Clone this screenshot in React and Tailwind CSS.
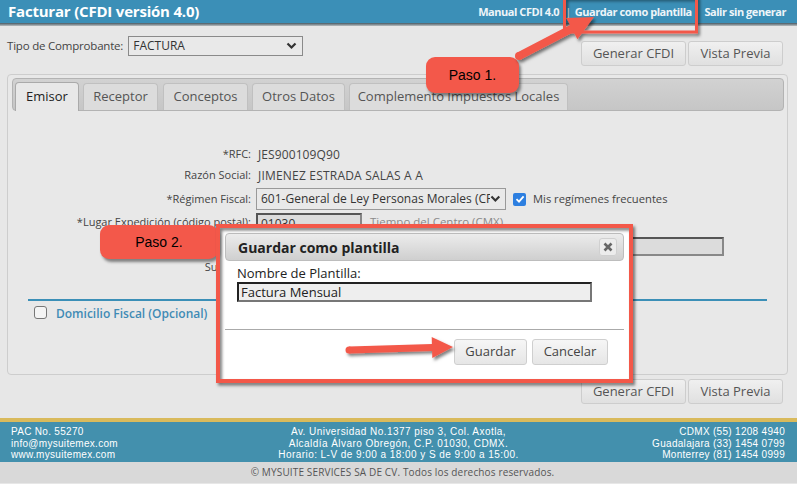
import React from "react";

function arrowPoints(x1, y1, x2, y2, sw, hl, hw) {
  const dx = x2 - x1, dy = y2 - y1;
  const L = Math.hypot(dx, dy);
  const ux = dx / L, uy = dy / L;
  const px = -uy, py = ux;
  const bx = x2 - ux * hl, by = y2 - uy * hl;
  const pts = [
    [x1 + (px * sw) / 2, y1 + (py * sw) / 2],
    [bx + (px * sw) / 2, by + (py * sw) / 2],
    [bx + (px * hw) / 2, by + (py * hw) / 2],
    [x2, y2],
    [bx - (px * hw) / 2, by - (py * hw) / 2],
    [bx - (px * sw) / 2, by - (py * sw) / 2],
    [x1 - (px * sw) / 2, y1 - (py * sw) / 2],
  ];
  return pts.map((p) => p[0].toFixed(1) + "," + p[1].toFixed(1)).join(" ");
}

function Chevron() {
  return (
    <svg width="11" height="8" viewBox="0 0 11 8">
      <path d="M1.5 1.5 L5.5 5.5 L9.5 1.5" fill="none" stroke="#333" strokeWidth="2.2" />
    </svg>
  );
}

function GrayButton({ children, w }) {
  return (
    <div
      className={`h-[25px] ${w} flex items-center justify-center rounded-[3px] border border-[#cdcdcd] bg-gradient-to-b from-[#f0f0f0] to-[#e0e0e0] text-[13px] text-[#555]`}
    >
      {children}
    </div>
  );
}

const RED = "#f3584a";

export default function App() {
  return (
    <div className="relative w-[797px] h-[484px] overflow-hidden bg-[#e7e7e7] font-['Open_Sans',sans-serif] text-[#444]">
      {/* Header */}
      <div className="h-[23px] bg-[#3b8fb7] flex items-center justify-between pl-[8px] pr-[11px]">
        <div className="text-white font-bold text-[15px] leading-none tracking-[-0.2px]">Facturar (CFDI versión 4.0)</div>
        <div className="font-bold text-[11px] leading-none flex items-center tracking-[-0.45px] text-[#eef5f9]">
          <span>Manual CFDI 4.0</span>
          <span className="ml-[6px] font-normal text-white">|</span>
          <span className="ml-[4px]">Guardar como plantilla</span>
          <span className="ml-[2px] font-normal text-white">|</span>
          <span className="ml-[5px]">Salir sin generar</span>
        </div>
      </div>
      <div className="h-[3px] bg-gradient-to-b from-[#4a5b65] to-[#b9bdbf]" />

      {/* Top row */}
      <div className="h-[48px] flex justify-between">
        <div className="pt-[10px] pl-[7px] flex items-start gap-[5px]">
          <span className="text-[11.5px] text-[#444] leading-[20px] tracking-[-0.2px]">Tipo de Comprobante:</span>
          <div className="w-[175px] h-[20px] border border-[#8a8a8a] bg-[#e9e9e9] flex items-center justify-between pl-[4px] pr-[5px] text-[12px] text-[#333]">
            <span>FACTURA</span>
            <Chevron />
          </div>
        </div>
        <div className="pt-[15px] pr-[14px] flex gap-[2px]">
          <GrayButton w="w-[105px]">Generar CFDI</GrayButton>
          <GrayButton w="w-[95px]">Vista Previa</GrayButton>
        </div>
      </div>

      {/* Tab container */}
      <div className="ml-[7px] w-[781px] h-[301px] border border-[#cdcdcd] rounded-[4px] bg-[#e8e8e8]">
        <div className="mt-[3px] ml-[4px] mr-[3px] h-[33px] rounded-[4px] border border-[#b3b3b3] bg-gradient-to-b from-[#d2d2d2] to-[#c6c6c6] flex items-end pl-[2px] gap-[4px]">
          <div className="w-[64px] h-[29px] -mb-px rounded-t-[4px] border border-b-0 border-[#aaa] bg-[#e8e8e8] flex items-center justify-center text-[13px] text-[#222]">Emisor</div>
          <div className="w-[75px] h-[27px] rounded-t-[4px] border border-b-0 border-[#c0c0c0] bg-[#dcdcdc] flex items-center justify-center text-[13px] text-[#555]">Receptor</div>
          <div className="w-[85px] h-[27px] ml-[1px] rounded-t-[4px] border border-b-0 border-[#c0c0c0] bg-[#dcdcdc] flex items-center justify-center text-[13px] text-[#555]">Conceptos</div>
          <div className="w-[93px] h-[27px] rounded-t-[4px] border border-b-0 border-[#c0c0c0] bg-[#dcdcdc] flex items-center justify-center text-[13px] text-[#555]">Otros Datos</div>
          <div className="w-[219px] h-[27px] rounded-t-[4px] border border-b-0 border-[#c0c0c0] bg-[#dcdcdc] flex items-center justify-center text-[13px] text-[#555]">Complemento Impuestos Locales</div>
        </div>

        <div className="pt-[33px] text-[12px] text-[#444]">
          <div className="h-[21px] flex items-center">
            <div className="w-[243px] text-right text-[11px]">*RFC:</div>
            <div className="ml-[7px] tracking-[0.1px]">JES900109Q90</div>
          </div>
          <div className="h-[21px] flex items-center">
            <div className="w-[243px] text-right text-[11px]">Razón Social:</div>
            <div className="ml-[7px] tracking-[0.2px]">JIMENEZ ESTRADA SALAS A A</div>
          </div>
          <div className="h-[24px] mt-[1px] flex items-center">
            <div className="w-[243px] text-right text-[11px]">*Régimen Fiscal:</div>
            <div className="ml-[5px] w-[250px] h-[22px] border border-[#999] bg-[#e9e9e9] flex items-center justify-between pl-[4px] pr-[4px] overflow-hidden">
              <span className="whitespace-nowrap overflow-hidden text-[#333]">601-General de Ley Personas Morales (CFI</span>
              <Chevron />
            </div>
            <div className="ml-[7px] w-[13px] h-[13px] rounded-[2px] bg-[#2d7fe0] flex items-center justify-center">
              <svg width="10" height="10" viewBox="0 0 10 10">
                <path d="M1.5 5.2 L4 7.6 L8.6 2.4" fill="none" stroke="#fff" strokeWidth="1.8" />
              </svg>
            </div>
            <div className="ml-[7px] text-[11.2px]">Mis regímenes frecuentes</div>
          </div>
          <div className="h-[25px] flex items-center">
            <div className="w-[243px] text-right text-[11px] -mt-[3px]">*Lugar Expedición (código postal):</div>
            <div className="ml-[5px] w-[106px] h-[22px] border-2 border-[#555] border-b-[#888] border-r-[#888] bg-[#dcdcdc] pl-[3px] text-[12px] leading-[18px] text-[#333]">01030</div>
            <div className="ml-[8px] text-[#8a8a8a] text-[11.5px] -mt-[3px]">Tiempo del Centro (CMX)</div>
          </div>
          <div className="h-[21px] flex items-center">
            <div className="ml-[622px] w-[94px] h-[19px] border-2 border-[#555] border-b-[#888] border-r-[#888] bg-[#dcdcdc]" />
          </div>
          <div className="h-[20px] flex items-center">
            <div className="w-[243px] text-right text-[11px]">Sucursal:</div>
          </div>
          <div className="mt-[22px] mx-[20px] h-[2px] bg-[#3b8fb7]" />
          <div className="mt-[4px] ml-[26px] flex items-center h-[14px]">
            <div className="w-[13px] h-[13px] rounded-[3px] border border-[#777] bg-[#f4f4f4]" />
            <div className="ml-[9px] mt-[4px] font-semibold text-[#3f8bb5]">Domicilio Fiscal (Opcional)</div>
          </div>
        </div>
      </div>

      {/* bottom buttons */}
      <div className="mt-[4px] pr-[14px] flex justify-end gap-[2px]">
        <GrayButton w="w-[105px]">Generar CFDI</GrayButton>
        <GrayButton w="w-[95px]">Vista Previa</GrayButton>
      </div>

      {/* Footer */}
      <div className="mt-[14px] h-[4px] bg-[#d9ba5c]" />
      <div className="h-[40px] bg-[#4390ad] text-white text-[10px] leading-[11.5px] tracking-[0.3px] font-['Liberation_Sans',sans-serif] flex pl-[11px] pr-[12px] pt-[4px]">
        <div className="w-[200px]">
          <div>PAC No. 55270</div>
          <div>info@mysuitemex.com</div>
          <div>www.mysuitemex.com</div>
        </div>
        <div className="flex-1 text-center tracking-[0.45px]">
          <div>Av. Universidad No.1377 piso 3, Col. Axotla,</div>
          <div>Alcaldía Álvaro Obregón, C.P. 01030, CDMX.</div>
          <div>Horario: L-V de 9:00 a 18:00 y S de 9:00 a 15:00.</div>
        </div>
        <div className="w-[199px] text-right">
          <div>CDMX (55) 1208 4940</div>
          <div>Guadalajara (33) 1454 0799</div>
          <div>Monterrey (81) 1454 0999</div>
        </div>
      </div>
      <div className="h-[21px] bg-[#d9d9d9] flex items-center justify-center text-[10px] text-[#555] tracking-[0.15px] pl-[8px]">
        © MYSUITE SERVICES SA DE CV. Todos los derechos reservados.
      </div>

      {/* Dialog */}
      <div className="absolute left-[220px] top-[228px] w-[409px] h-[151px] bg-white">
        <div className="mt-[5px] ml-[5px] mr-[5px] h-[28px] rounded-[4px] border border-[#bdbdbd] bg-gradient-to-b from-[#ececec] to-[#cfcfcf] flex items-center justify-between pl-[12px] pr-[6px]">
          <span className="font-bold text-[14px] text-[#222]">Guardar como plantilla</span>
          <div className="w-[18px] h-[18px] rounded-[3px] border border-[#d0d0d0] bg-[#ececec] flex items-center justify-center">
            <svg width="10" height="10" viewBox="0 0 10 10">
              <path d="M1.5 1.5 L8.5 8.5 M8.5 1.5 L1.5 8.5" stroke="#666" strokeWidth="2.6" />
            </svg>
          </div>
        </div>
        <div className="pl-[17px] pt-[3px] text-[13px] leading-[18px] text-[#222]">Nombre de Plantilla:</div>
        <div className="ml-[17px] w-[355px] h-[20px] border-2 border-[#222] border-b-[#777] border-r-[#777] bg-[#eeeeee] pl-[2px] text-[13px] leading-[16px] text-[#222]">Factura Mensual</div>
        <div className="mt-[27px] mx-[5px] h-px bg-[#aaa]" />
        <div className="mt-[9px] pr-[21px] flex justify-end gap-[5px]">
          <div className="w-[73px] h-[26px] rounded-[3px] border border-[#cfcfcf] bg-gradient-to-b from-[#f6f6f6] to-[#e6e6e6] flex items-center justify-center text-[13px] text-[#444]">Guardar</div>
          <div className="w-[76px] h-[26px] rounded-[3px] border border-[#cfcfcf] bg-gradient-to-b from-[#f6f6f6] to-[#e6e6e6] flex items-center justify-center text-[13px] text-[#444]">Cancelar</div>
        </div>
      </div>

      {/* Callout boxes */}
      <div className="absolute left-[426px] top-[57px] w-[93px] h-[36px] rounded-[9px] bg-[#f3584a] shadow-[2px_3px_3px_rgba(0,0,0,0.45)] flex items-center justify-center font-['Liberation_Sans',sans-serif] text-[14px] text-black">
        Paso 1.
      </div>
      <div className="absolute left-[100px] top-[225px] w-[118px] h-[34px] rounded-[9px] bg-[#f3584a] shadow-[2px_3px_3px_rgba(0,0,0,0.45)] flex items-center justify-center font-['Liberation_Sans',sans-serif] text-[14px] text-black">
        Paso 2.
      </div>

      {/* Annotations */}
      <svg className="absolute inset-0 pointer-events-none" width="797" height="484" viewBox="0 0 797 484">
        <defs>
          <filter id="sh" x="-20%" y="-20%" width="140%" height="140%">
            <feDropShadow dx="2" dy="2.5" stdDeviation="1.5" floodColor="#000" floodOpacity="0.5" />
          </filter>
        </defs>
        <g filter="url(#sh)">
          <rect x="564.5" y="-3" width="132" height="35" fill="none" stroke={RED} strokeWidth="3" />
          <rect x="218" y="226" width="413" height="155" fill="none" stroke={RED} strokeWidth="4" />
          <polygon points={arrowPoints(519, 56, 594, 17, 8, 25, 24)} fill={RED} strokeLinejoin="round" />
          <circle cx="519" cy="56" r="4" fill={RED} />
          <polygon points={arrowPoints(349, 350, 453, 347, 7, 21, 21)} fill={RED} />
          <circle cx="349" cy="350" r="3.5" fill={RED} />
        </g>
      </svg>
    </div>
  );
}
